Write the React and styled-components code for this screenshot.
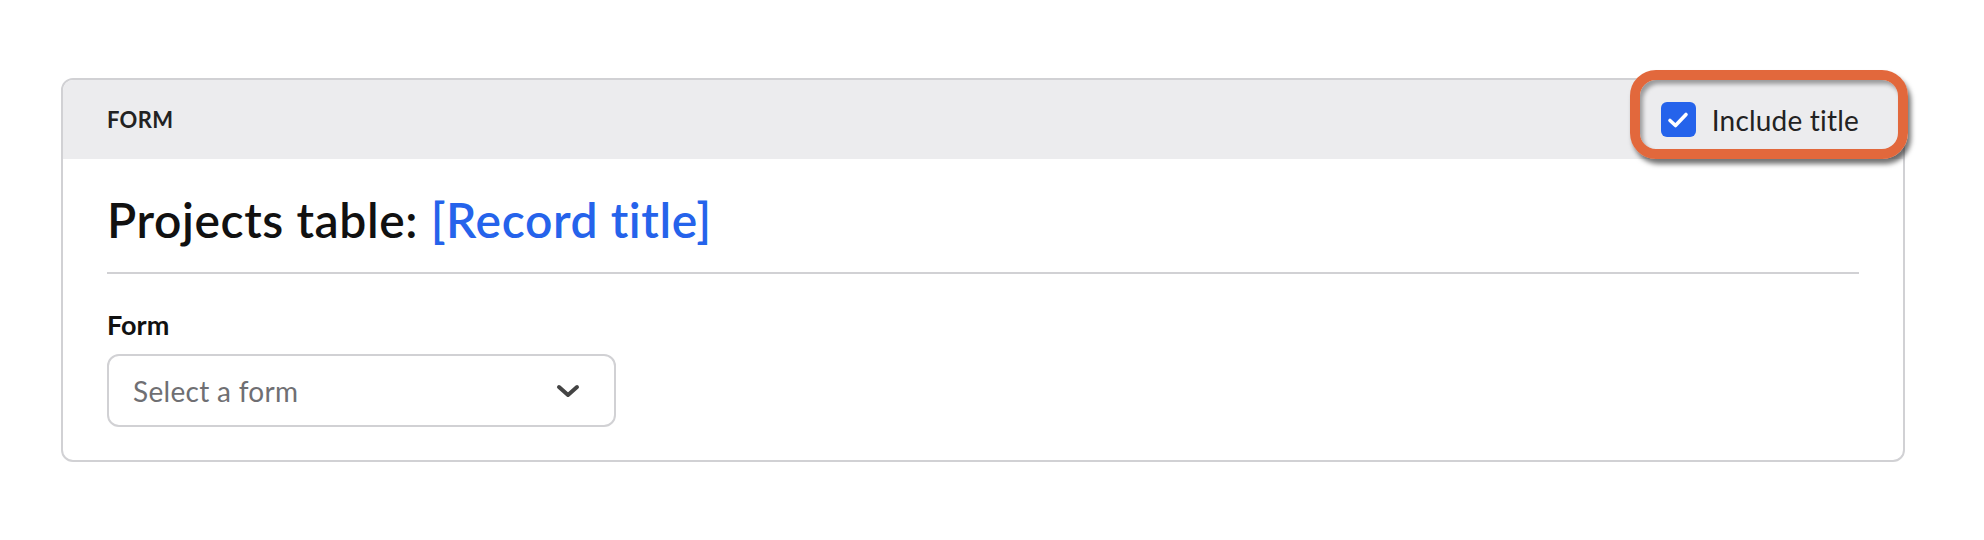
import React from 'react';
import styled, { createGlobalStyle } from 'styled-components';

const GlobalStyle = createGlobalStyle`
  html, body {
    margin: 0;
    padding: 0;
    background: #ffffff;
  }
  body {
    font-family: Lato, "Open Sans", "Liberation Sans", sans-serif;
    font-variant-ligatures: none;
    color: #1c1c1e;
  }
`;

const Page = styled.div`
  padding: 78px 0 0 61px;
  height: 540px;
  box-sizing: border-box;
`;

const Card = styled.section`
  width: 1844px;
  box-sizing: border-box;
  border: 2px solid #d1d1d4;
  border-radius: 12px;
  background: #ffffff;
`;

const Header = styled.header`
  height: 79px;
  display: flex;
  align-items: center;
  justify-content: space-between;
  padding: 0 44px;
  background: #ececee;
  border-radius: 10px 10px 0 0;
`;

const Eyebrow = styled.span`
  font-size: 22px;
  font-weight: 700;
  letter-spacing: 0.3px;
  color: #222;
`;

const Toggle = styled.label`
  position: relative;
  display: flex;
  align-items: center;
  gap: 16px;
  font-size: 28px;
  letter-spacing: 0.2px;
  color: #222;
`;

const Box = styled.span`
  width: 35px;
  height: 35px;
  border-radius: 6px;
  background: ${(p) => (p.checked ? '#2563eb' : '#fff')};
  display: flex;
  align-items: center;
  justify-content: center;
`;

/* annotation ring drawn over the header */
const Callout = styled.span`
  position: absolute;
  left: -31px;
  right: -49px;
  top: -32px;
  bottom: -22px;
  border: 10px solid #e2683c;
  border-radius: 26px;
  box-shadow: 3px 5px 5px rgba(0, 0, 0, 0.55), inset 3px 4px 4px rgba(0, 0, 0, 0.35);
  pointer-events: none;
`;

const Body = styled.div`
  padding: 31px 44px 33px;
`;

const Title = styled.h1`
  margin: 0;
  font-size: 48px;
  line-height: 60px;
  font-weight: 600;
  letter-spacing: 0.6px;
  color: #111;
  padding-bottom: 22px;
  border-bottom: 2px solid #d1d1d4;
`;

const Token = styled.span`
  color: #2563eb;
`;

const Field = styled.div`
  margin-top: 35px;
  display: flex;
  flex-direction: column;
  gap: 13px;
`;

const Label = styled.div`
  font-size: 27px;
  line-height: 32px;
  font-weight: 700;
  color: #111;
`;

const Select = styled.div`
  width: 509px;
  height: 73px;
  box-sizing: border-box;
  border: 2px solid #d1d1d4;
  border-radius: 12px;
  display: flex;
  align-items: center;
  justify-content: space-between;
  padding: 0 34px 0 24px;
  font-size: 28px;
  letter-spacing: 0.3px;
  color: #6f6f73;
`;

const Check = () => (
  <svg width="24" height="24" viewBox="0 0 24 24" fill="none">
    <polyline points="4,12.5 9.5,17.5 20,6.5" stroke="#fff" strokeWidth="3.6" strokeLinecap="round" strokeLinejoin="round" />
  </svg>
);

const Chevron = () => (
  <svg width="24" height="14" viewBox="0 0 24 14" fill="none">
    <polyline points="3,3 12,11 21,3" stroke="#444" strokeWidth="4" strokeLinecap="round" strokeLinejoin="round" />
  </svg>
);

export default function App() {
  return (
    <Page>
      <GlobalStyle />
      <Card>
        <Header>
          <Eyebrow>FORM</Eyebrow>
          <Toggle>
            <Box checked>
              <Check />
            </Box>
            Include title
            <Callout />
          </Toggle>
        </Header>
        <Body>
          <Title>
            Projects table: <Token>[Record title]</Token>
          </Title>
          <Field>
            <Label>Form</Label>
            <Select>
              Select a form
              <Chevron />
            </Select>
          </Field>
        </Body>
      </Card>
    </Page>
  );
}
